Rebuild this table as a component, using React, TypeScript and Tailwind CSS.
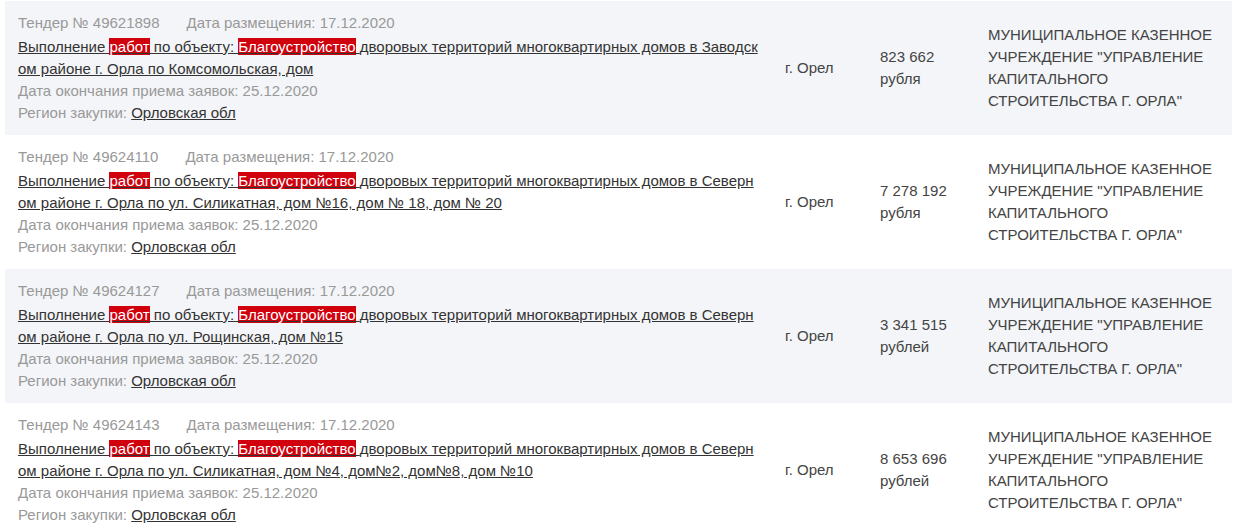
import React from 'react';

type Tender = {
  id: string;
  tail: string;
  price: string;
  unit: string;
};

const tenders: Tender[] = [
  { id: '49621898', tail: 'дворовых территорий многоквартирных домов в Заводском районе г. Орла по Комсомольская, дом', price: '823 662', unit: 'рубля' },
  { id: '49624110', tail: 'дворовых территорий многоквартирных домов в Северном районе г. Орла по ул. Силикатная, дом №16, дом № 18, дом № 20', price: '7 278 192', unit: 'рубля' },
  { id: '49624127', tail: 'дворовых территорий многоквартирных домов в Северном районе г. Орла по ул. Рощинская, дом №15', price: '3 341 515', unit: 'рублей' },
  { id: '49624143', tail: 'дворовых территорий многоквартирных домов в Северном районе г. Орла по ул. Силикатная, дом №4, дом№2, дом№8, дом №10', price: '8 653 696', unit: 'рублей' },
];

const Hl = ({ children }: { children: React.ReactNode }) => (
  <span className="bg-[#d0000d] text-white">{children}</span>
);

const Row = ({ t, odd }: { t: Tender; odd: boolean }) => (
  <div className={`flex h-[134px] ${odd ? 'bg-[#f3f5f8]' : 'bg-white'}`}>
    <div className="w-[767px] pl-[13px] pr-[13px] pt-[11px] text-[15px] leading-[22px]">
      <div className="text-[#999] mb-[2px]">
        <span>Тендер № {t.id}</span>
        <span className="ml-[27px]">Дата размещения: 17.12.2020</span>
      </div>
      <a href="#" className="block text-[#333] underline break-all">
        Выполнение <Hl>работ</Hl> по объекту: <Hl>Благоустройство</Hl> {t.tail}
      </a>
      <div className="text-[#999]">Дата окончания приема заявок: 25.12.2020</div>
      <div className="text-[#999]">
        Регион закупки: <a href="#" className="text-[#333] underline">Орловская обл</a>
      </div>
    </div>
    <div className="w-[95px] pl-[13px] flex items-center text-[15px] leading-[22px] text-[#444]">г. Орел</div>
    <div className="w-[108px] pl-[13px] flex flex-col justify-center text-[15px] leading-[22px] text-[#444]">
      <span>{t.price}</span>
      <span>{t.unit}</span>
    </div>
    <div className="flex-1 pl-[13px] pr-[6px] flex items-center text-[15px] leading-[22px] text-[#444]">
      МУНИЦИПАЛЬНОЕ КАЗЕННОЕ УЧРЕЖДЕНИЕ "УПРАВЛЕНИЕ КАПИТАЛЬНОГО СТРОИТЕЛЬСТВА Г. ОРЛА"
    </div>
  </div>
);

export default function App() {
  return (
    <div className="w-[1245px] h-[530px] overflow-hidden bg-white font-['Liberation_Sans',Arial,sans-serif]">
      <div className="ml-[5px] w-[1227px] pt-[1px]">
        {tenders.map((t, i) => (
          <Row key={t.id} t={t} odd={i % 2 === 0} />
        ))}
      </div>
    </div>
  );
}
